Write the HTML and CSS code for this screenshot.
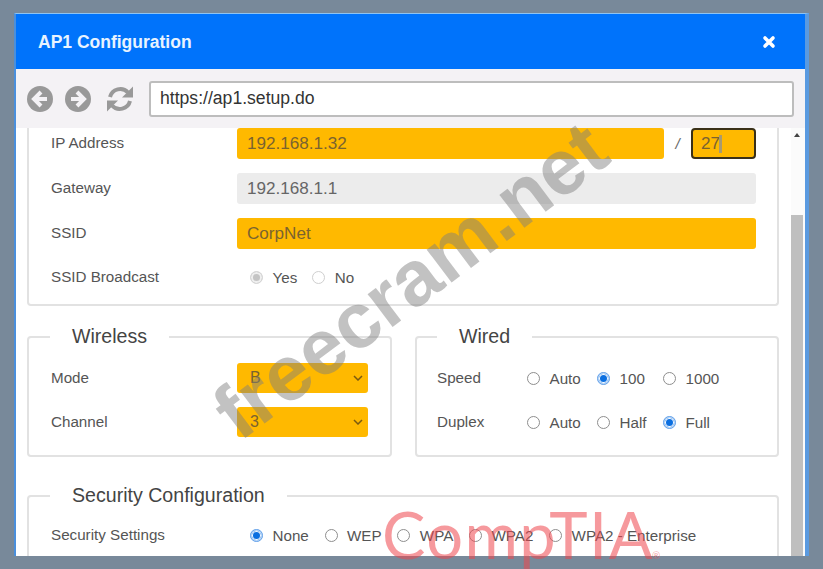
FILE: index.html
```html
<!DOCTYPE html>
<html>

<head>
    <title>AP1 Configuration</title>
    <link rel="stylesheet" href="styles.css">
</head>

<body>

    <div class="window">
        <div class="titlebar">
            <span class="title">AP1 Configuration</span>
            <svg class="close" viewBox="0 0 14 14" width="14" height="14">
                <path d="M3 3 L11 11 M11 3 L3 11" stroke="#fff" stroke-width="3.6" stroke-linecap="round" />
            </svg>
        </div>

        <div class="toolbar">
            <svg class="nav" viewBox="0 0 28 28" width="28" height="28">
                <circle cx="14" cy="14" r="13" fill="#999" />
                <path d="M15 7 L8 14 L15 21 M8.5 14 H21" fill="none" stroke="#f4f2f5" stroke-width="4" />
            </svg>
            <svg class="nav" viewBox="0 0 28 28" width="28" height="28">
                <circle cx="14" cy="14" r="13" fill="#999" />
                <path d="M13 7 L20 14 L13 21 M19.5 14 H7" fill="none" stroke="#f4f2f5" stroke-width="4" />
            </svg>
            <svg class="nav refresh" viewBox="0 0 28 28" width="28" height="28">
                <path d="M4 12 A10.5 10.5 0 0 1 22 7.5" fill="none" stroke="#999" stroke-width="4" />
                <path d="M27 1.5 V12.5 H16 Z" fill="#999" />
                <path d="M24 16 A10.5 10.5 0 0 1 6 20.5" fill="none" stroke="#999" stroke-width="4" />
                <path d="M1 26.5 V15.5 H12 Z" fill="#999" />
            </svg>
            <input class="url" type="text" value="https://ap1.setup.do">
        </div>

        <div class="viewport">
            <div class="content">
                <div class="panel panel-top">
                    <div class="row">
                        <label>IP Address</label>
                        <div class="ip-group">
                            <div class="field amber">192.168.1.32</div>
                            <span class="slash">/</span>
                            <div class="field amber focused">27<span class="caret"></span></div>
                        </div>
                    </div>
                    <div class="row">
                        <label>Gateway</label>
                        <div class="field grey">192.168.1.1</div>
                    </div>
                    <div class="row">
                        <label>SSID</label>
                        <div class="field amber">CorpNet</div>
                    </div>
                    <div class="row">
                        <label>SSID Broadcast</label>
                        <div class="radios">
                            <span class="opt"><i class="radio off-on"></i>Yes</span>
                            <span class="opt"><i class="radio faint"></i>No</span>
                        </div>
                    </div>
                </div>

                <div class="columns">
                    <fieldset class="panel">
                        <legend>Wireless</legend>
                        <div class="row">
                            <label>Mode</label>
                            <div class="select">B<svg viewBox="0 0 10 6" width="10" height="6"><path d="M1 1 L5 5 L9 1" fill="none" stroke="#7a5a10" stroke-width="1.5" /></svg></div>
                        </div>
                        <div class="row">
                            <label>Channel</label>
                            <div class="select">3<svg viewBox="0 0 10 6" width="10" height="6"><path d="M1 1 L5 5 L9 1" fill="none" stroke="#7a5a10" stroke-width="1.5" /></svg></div>
                        </div>
                    </fieldset>

                    <fieldset class="panel wired">
                        <legend>Wired</legend>
                        <div class="row">
                            <label>Speed</label>
                            <div class="radios">
                                <span class="opt w-70"><i class="radio"></i>Auto</span>
                                <span class="opt w-66"><i class="radio on"></i>100</span>
                                <span class="opt"><i class="radio"></i>1000</span>
                            </div>
                        </div>
                        <div class="row">
                            <label>Duplex</label>
                            <div class="radios">
                                <span class="opt w-70"><i class="radio"></i>Auto</span>
                                <span class="opt w-66"><i class="radio"></i>Half</span>
                                <span class="opt"><i class="radio on"></i>Full</span>
                            </div>
                        </div>
                    </fieldset>
                </div>

                <fieldset class="panel security">
                    <legend>Security Configuration</legend>
                    <div class="row">
                        <label>Security Settings</label>
                        <div class="radios">
                            <span class="opt"><i class="radio on"></i>None</span>
                            <span class="opt"><i class="radio"></i>WEP</span>
                            <span class="opt"><i class="radio"></i>WPA</span>
                            <span class="opt"><i class="radio"></i>WPA2</span>
                            <span class="opt"><i class="radio"></i>WPA2 - Enterprise</span>
                        </div>
                    </div>
                </fieldset>
            </div>

            <div class="scrollbar">
                <span class="arrow"></span>
                <div class="thumb"></div>
            </div>
        </div>
    </div>

    <div class="mark-site">freecram.net</div>
    <div class="mark-brand">CompTIA<sup>®</sup></div>

</body>

</html>
```

FILE: styles.css
```css
* {
    box-sizing: border-box;
}

html,
body {
    margin: 0;
    height: 569px;
    overflow: hidden;
}

body {
    position: relative;
    background-color: #78899a;
    font-family: "Liberation Sans", Arial, sans-serif;
    color: #555;
    padding: 13px 14px 0;
}

.window {
    width: 795px;
    height: 543px;
    display: flex;
    flex-direction: column;
    background-color: #fff;
    border-left: 2px solid #4a8fdc;
    border-right: 4px solid #5a9ae0;
    border-top: 1px solid #8ec4f2;
    overflow: hidden;
}

.titlebar {
    height: 55px;
    flex: none;
    display: flex;
    align-items: center;
    justify-content: space-between;
    background-color: #0073fb;
    padding: 0 29px 0 22px;
}

.title {
    color: #e8f3ff;
    font-weight: bold;
    font-size: 17.5px;
    margin-top: 2px;
}

.toolbar {
    height: 59px;
    flex: none;
    display: flex;
    align-items: center;
    background-color: #f4f2f5;
    padding: 0 11px 0 10px;
}

.nav {
    margin-right: 10px;
}

.refresh {
    margin: 0 15px 0 4px;
}

.url {
    flex: 1;
    height: 36px;
    border: 2px solid #bdbdbd;
    border-radius: 3px;
    background-color: #fff;
    padding: 0 9px;
    font-family: "Liberation Sans", Arial, sans-serif;
    font-size: 17.6px;
    color: #333;
}

.viewport {
    flex: 1;
    display: flex;
    min-height: 0;
    overflow: hidden;
}

.content {
    flex: 1;
    padding-left: 11px;
    padding-right: 12px;
    min-width: 0;
}

.panel {
    border: 2px solid #e2e2e2;
    border-radius: 4px;
    margin: 0;
    padding: 0 21px 0 22px;
    min-width: 0;
    background-color: #fff;
}

.panel legend {
    font-size: 19.6px;
    color: #444;
    margin-left: -1px;
    padding: 0 22px 2px;
    line-height: 20px;
}

.panel-top {
    border-top: none;
    border-radius: 0 0 4px 4px;
    height: 178px;
}

.row {
    display: grid;
    grid-template-columns: 186px 1fr;
    align-items: center;
    height: 45px;
    font-size: 15.2px;
}

.panel-top .row {
    height: 31px;
    margin-bottom: 14px;
}

.panel-top .row:first-child {
    height: 30px;
    margin-bottom: 15px;
}

.panel-top .row:last-child {
    height: 28px;
    margin-bottom: 0;
}

.row label {
    color: #555;
    padding-bottom: 2px;
}

.ip-group {
    display: flex;
    align-items: center;
}

.ip-group .field:first-child {
    width: 427px;
}

.slash {
    width: 27px;
    text-align: center;
    font-style: italic;
    color: #666;
}

.field {
    height: 31px;
    border-radius: 3px;
    padding: 0 10px;
    line-height: 31px;
    font-size: 17.1px;
}

.amber {
    background-color: #ffb900;
    color: #7a6330;
}

.grey {
    background-color: #ececec;
    color: #666;
}

.focused {
    width: 65px;
    border: 2px solid #3a3018;
    border-radius: 4px;
    line-height: 27px;
    padding: 0 8px;
}

.caret {
    display: inline-block;
    width: 3px;
    height: 18px;
    margin-left: -1px;
    vertical-align: -4px;
    background-color: #a89a70;
}

.radios {
    display: flex;
    align-items: center;
    gap: 15px;
    padding-left: 13px;
    font-size: 15.2px;
}

.opt {
    display: flex;
    align-items: center;
    gap: 9.5px;
    color: #555;
}

.w-70 {
    width: 70px;
    margin-right: -15px;
}

.w-66 {
    width: 66px;
    margin-right: -15px;
}

.radio {
    display: block;
    width: 13px;
    height: 13px;
    border-radius: 50%;
    border: 1px solid #8e8e8e;
    background-color: #fff;
}

.radio.on {
    background-color: #0b6fe0;
    border: 2px solid #bcd8f8;
    outline: 1px solid #6aa5ea;
    outline-offset: -1px;
    box-shadow: inset 0 0 0 1px #fff;
}

.radio.off-on {
    background-color: #c4c4c4;
    border: 1px solid #d6d6d6;
    box-shadow: inset 0 0 0 2px #efefef;
}

.radio.faint {
    border-color: #cfcfcf;
}

.columns {
    display: grid;
    grid-template-columns: 365px 364px;
    gap: 23px;
    margin-top: 20px;
}

.columns .panel {
    height: 131px;
    padding-top: 8px;
}

.columns .row {
    height: 44px;
}

.wired {
    padding-left: 20px;
}

.panel.wired legend {
    margin-left: 0;
}

.wired .row {
    grid-template-columns: 90px 1fr;
}

.wired .radios {
    padding-left: 0;
}

.select {
    width: 131px;
    height: 30px;
    border-radius: 3px;
    background-color: #ffb900;
    color: #7a6330;
    font-size: 16px;
    padding: 0 5px 0 13px;
    display: flex;
    align-items: center;
    justify-content: space-between;
}

.security {
    margin-top: 28px;
    height: 120px;
    padding-top: 6px;
}

.security .radios {
    gap: 15.7px;
}

.scrollbar {
    width: 14px;
    flex: none;
    display: flex;
    flex-direction: column;
    align-items: center;
    background-color: #fbfbfb;
    padding-right: 2px;
}

.arrow {
    margin-top: 5px;
    border-left: 3px solid transparent;
    border-right: 3px solid transparent;
    border-bottom: 4px solid #444;
}

.thumb {
    width: 100%;
    margin-top: 78px;
    flex: 1;
    background-color: #bfbfbf;
}

.mark-site {
    position: absolute;
    left: 176px;
    top: 240px;
    font-weight: bold;
    font-size: 78px;
    line-height: 80px;
    white-space: nowrap;
    color: rgba(125, 125, 125, 0.47);
    transform: rotate(-37deg);
}

.mark-brand {
    position: absolute;
    left: 382px;
    top: 494px;
    font-family: Lato, sans-serif;
    font-size: 65px;
    line-height: 80px;
    letter-spacing: 1.4px;
    white-space: nowrap;
    color: rgba(238, 70, 76, 0.55);
}

.mark-brand sup {
    font-size: 10px;
    vertical-align: baseline;
    margin-left: -2px;
}
```
